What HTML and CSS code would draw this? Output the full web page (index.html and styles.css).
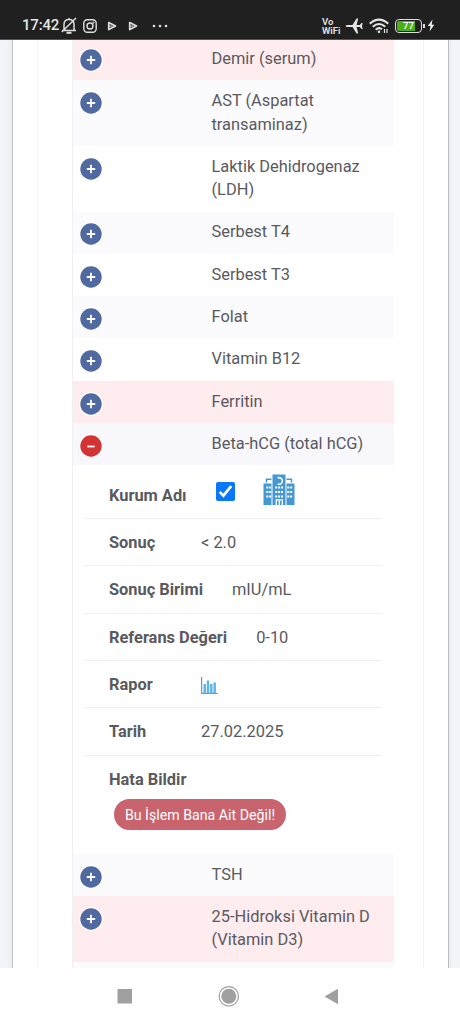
FILE: index.html
```html
<!DOCTYPE html>
<html lang="tr">
<head>
<meta charset="utf-8">
<title>Tahliller</title>
<link rel="stylesheet" href="styles.css">
</head>
<body>
<svg width="0" height="0" class="defs">
  <symbol id="plus" viewBox="0 0 26 26"><circle cx="13" cy="13" r="11.8" fill="#fff"/><circle cx="13" cy="13" r="10.7" fill="#5069a0"/><path d="M13 8.800v8.400M8.800 13h8.400" stroke="#fff" stroke-width="1.8"/></symbol>
  <symbol id="minus" viewBox="0 0 26 26"><circle cx="13" cy="13" r="11.8" fill="#fff"/><circle cx="13" cy="13" r="10.7" fill="#d33335"/><path d="M9.300 13.500h7.400" stroke="#fff" stroke-width="1.8"/></symbol>
  <symbol id="play" viewBox="0 0 10 10"><path d="M1.700 1.500L8.500 5 1.700 8.600z" fill="none" stroke="#ddd" stroke-width="1.700" stroke-linejoin="round"/><path d="M2 5h3.500" stroke="#ddd"/></symbol>
</svg>
<header class="status">
  <span class="clock">17:42</span>
  <svg class="bell" width="16" height="18" viewBox="0 0 16 18" fill="none" stroke="#ddd" stroke-width="1.500"><path d="M1 13.500h14M3 13V7.500C3 4 5 2.500 8 2.500s5 1.500 5 5V13M8 1v1.500M.8 15L15 1"/><path d="M5.500 15.800h5" stroke-width="2"/></svg>
  <svg class="insta" width="14" height="14" viewBox="0 0 14 14" fill="none" stroke="#ddd" stroke-width="1.400"><rect x=".8" y=".8" width="12.400" height="12.400" rx="3.500"/><circle cx="7" cy="7" r="3"/><circle cx="10.500" cy="3.600" r=".4"/></svg>
  <svg class="play1" width="10" height="10"><use href="#play"/></svg>
  <svg class="play2" width="10" height="10"><use href="#play"/></svg>
  <svg class="dots" width="16" height="4" viewBox="0 0 16 4" fill="#ddd"><circle cx="2" cy="2" r="1.300"/><circle cx="8" cy="2" r="1.300"/><circle cx="14" cy="2" r="1.300"/></svg>
  <span class="vowifi">Vo<br>WiFi</span>
  <svg class="plane" width="18" height="18" viewBox="0 0 18 18" fill="#e4e4e4"><path d="M.5 9Q1 7.900 2.500 7.900H7.500L11.500 1.500h1.700L11.600 7.900h3.200L16.500 6h1.200L17 9l.7 3h-1.200l-1.700-1.900h-3.200l1.600 6.400h-1.700L7.500 10.100h-5Q1 10.100.5 9z"/></svg>
  <svg class="wifi" width="20" height="16" viewBox="0 0 20 16" fill="none" stroke="#e4e4e4" stroke-width="2.100"><path d="M.8 5.600Q10-2.500 19.200 5.600M3.800 8.800Q10 3.200 16.200 8.800M6.700 11.700Q10 8.700 13 11.300"/><circle cx="10" cy="13.700" r="1.300" fill="#e4e4e4" stroke="none"/><path d="M15.500 11v4M18 11v4" stroke-width="1.200"/></svg>
  <span class="battery"><span class="level">77</span></span>
  <svg class="bolt" width="8" height="13" viewBox="0 0 8 13" fill="#eee"><path d="M5.500.5L.8 7h2.700L2.600 12.500 7.300 5.800H4.700z"/></svg>
</header>
<main class="page">
  <div class="sheet">
    <div class="panel">
      <div class="table">
        <div class="row first alert"><svg class="toggle"><use href="#plus"/></svg><span>Demir (serum)</span></div>
        <div class="row double odd"><svg class="toggle"><use href="#plus"/></svg><span>AST (Aspartat<br>transaminaz)</span></div>
        <div class="row double"><svg class="toggle"><use href="#plus"/></svg><span>Laktik Dehidrogenaz<br>(LDH)</span></div>
        <div class="row odd"><svg class="toggle"><use href="#plus"/></svg><span>Serbest T4</span></div>
        <div class="row"><svg class="toggle"><use href="#plus"/></svg><span>Serbest T3</span></div>
        <div class="row odd"><svg class="toggle"><use href="#plus"/></svg><span>Folat</span></div>
        <div class="row"><svg class="toggle"><use href="#plus"/></svg><span>Vitamin B12</span></div>
        <div class="row alert"><svg class="toggle"><use href="#plus"/></svg><span>Ferritin</span></div>
        <div class="row open"><svg class="toggle"><use href="#minus"/></svg><span>Beta-hCG (total hCG)</span></div>
        <div class="details">
          <div class="item org"><b>Kurum Adı</b>
            <svg class="check" width="19" height="19" viewBox="0 0 19 19"><rect width="19" height="19" rx="2" fill="#0878f8"/><path d="M3.700 9.900l3.700 3.800L15.200 4.200" fill="none" stroke="#fff" stroke-width="2.700"/></svg>
            <svg class="hospital" width="32" height="32" viewBox="0 0 32 32"><path fill="#4499d2" d="M9.500.5h13V31h-13zM.5 9.500h8V31h-8zM23.500 9.500h8V31h-8z"/><path d="M3.500 8.500V5.300h5M28.500 8.500V5.300h-5" fill="none" stroke="#4499d2" stroke-width="1.500"/><path d="M14.600 4a3.300 3.300 0 1 1 0 5.900" fill="none" stroke="#fff" stroke-width="1.500"/><path d="M3.300 13.500h4.800M3.300 18h4.800M3.300 22.500h4.800M24.300 13.500h4.800M24.300 18h4.800M24.300 22.500h4.800M12.200 13.500h8.400M12.200 18h8.400M12.200 22.500h8.400" stroke="#fff" stroke-width="2" stroke-dasharray="2 .9"/><path d="M13.300 31v-5.200h6V31M16.300 26v5" fill="none" stroke="#fff" stroke-width="1.300"/></svg>
          </div>
          <div class="item"><b class="fixed">Sonuç</b><span>&lt; 2.0</span></div>
          <div class="item"><b>Sonuç Birimi</b><span>mIU/mL</span></div>
          <div class="item"><b>Referans Değeri</b><span>0-10</span></div>
          <div class="item"><b class="fixed">Rapor</b><svg class="chart" width="17" height="17" viewBox="0 0 17 17"><path d="M.6 0v16.400H16.500" fill="none" stroke="#4da4dc" stroke-width="1.200"/><path d="M3.700 7v9M7 3.500V16M10.300 7v9M13.700 5.500V16" stroke="#63b4e8" stroke-width="2.500"/></svg></div>
          <div class="item"><b class="fixed">Tarih</b><span>27.02.2025</span></div>
          <div class="item report"><b>Hata Bildir</b><button class="dispute">Bu İşlem Bana Ait Değil!</button></div>
        </div>
        <div class="row odd"><svg class="toggle"><use href="#plus"/></svg><span>TSH</span></div>
        <div class="row double alert"><svg class="toggle"><use href="#plus"/></svg><span>25-Hidroksi Vitamin D<br>(Vitamin D3)</span></div>
        <div class="row odd"></div>
      </div>
    </div>
  </div>
</main>
<nav class="nav">
  <svg width="460" height="56" viewBox="0 0 460 56" fill="#a0a0a0"><rect x="117.500" y="21" width="14.500" height="14.500"/><circle cx="228.800" cy="28.300" r="7.500"/><circle cx="228.800" cy="28.300" r="9.700" fill="none" stroke="#a0a0a0" stroke-width="1.200"/><path d="M324.500 28.500L338 20.800v15.400z"/></svg>
</nav>
</body>
</html>
```
FILE: styles.css
```css
* { box-sizing: border-box; }
body {
  margin: 0;
  width: 460px;
  height: 1024px;
  display: flex;
  flex-direction: column;
  overflow: hidden;
  background: #fefefe;
  color: #595a60;
  font: 16.4px/23.5px Roboto, sans-serif;
}
.defs { position: absolute; }
.status {
  flex: none;
  height: 40px;
  padding: 12px 0 0 22px;
  display: flex;
  align-items: center;
  background: #202020;
  border-bottom: 1px solid #555;
  color: #e4e4e4;
}
.status > * { flex: none; }
.clock { width: 37px; font-size: 15px; font-weight: 500; letter-spacing: -0.2px; white-space: nowrap; }
.bell { margin-left: 2px; }
.insta { margin-left: 6px; }
.play1 { margin-left: 10px; }
.play2 { margin-left: 11px; }
.dots { margin-left: 14px; }
.vowifi { margin-left: 154px; width: 21px; font-size: 9.5px; line-height: 9px; font-weight: 600; white-space: nowrap; }
.plane { margin-left: 2px; }
.wifi { margin-left: 6px; }
.battery {
  position: relative;
  margin-left: 6px;
  width: 27px;
  height: 14px;
  padding: 1px;
  border: 1.5px solid #ddd;
  border-radius: 4px;
}
.battery::after { content: ""; position: absolute; right: -4px; top: 4px; width: 2px; height: 4px; background: #ddd; }
.level {
  display: block;
  width: 100%;
  height: 100%;
  border-radius: 2px;
  background: linear-gradient(90deg, #4caf18 77%, #202020 77%);
  font-size: 9.5px;
  line-height: 10px;
  font-weight: 500;
  text-align: center;
  color: #fff;
}
.bolt { margin-left: 5px; }
.page {
  flex: none;
  height: 928px;
  padding: 0 11px 0 12px;
  background: #f2f4f9;
  overflow: hidden;
}
.sheet {
  height: 100%;
  padding: 0 24px;
  background: #fff;
  border-left: 1px solid #c4c7ca;
  border-right: 1px solid #b9bcc1;
  box-shadow: 0 0 5px #dfe2e8;
}
.panel {
  height: 100%;
  padding: 0 29px 0 34px;
  border-left: 1px solid #f4f4f5;
  border-right: 1px solid #f4f4f5;
}
.table { border-left: 1px solid #f0f0f2; }
.row {
  height: 42.3px;
  padding: 9px 0 0 4.500px;
  display: flex;
  align-items: flex-start;
}
.row.first { height: 40px; padding-top: 6.5px; }
.row.double { height: 65.7px; }
.row.odd { background: #fbfbfd; }
.row.open { background: #f7f7fc; }
.row.alert { background: #ffecee; }
.toggle { width: 26px; height: 26px; flex: none; margin-top: 1px; margin-right: 108px; }
.first .toggle { margin-top: 0.5px; }
.row span { white-space: nowrap; }
.details { height: 388.5px; padding: 0 12px 0 11px; }
.item {
  height: 47.3px;
  padding: 1px 0 0 25px;
  display: flex;
  align-items: center;
  border-bottom: 1px solid #f0f0f1;
  white-space: nowrap;
}
.item b { margin-right: 29px; }
.item .fixed { width: 92px; margin-right: 0; }
.item.org { height: 54px; padding-top: 8px; }
.check { margin: -9px 28px 0 0; }
.hospital { margin-top: -11px; }
.chart { margin-top: 2px; }
.item.report { height: 98px; padding-top: 12px; flex-direction: column; align-items: flex-start; border: 0; }
.dispute {
  width: 172px;
  height: 31px;
  margin: 8px 0 0 5px;
  padding: 0;
  border: 0;
  border-radius: 16px;
  background: #c9646e;
  color: #fff;
  font: 14.2px Roboto, sans-serif;
}
.nav { flex: none; height: 56px; background: #fefefe; }
```
